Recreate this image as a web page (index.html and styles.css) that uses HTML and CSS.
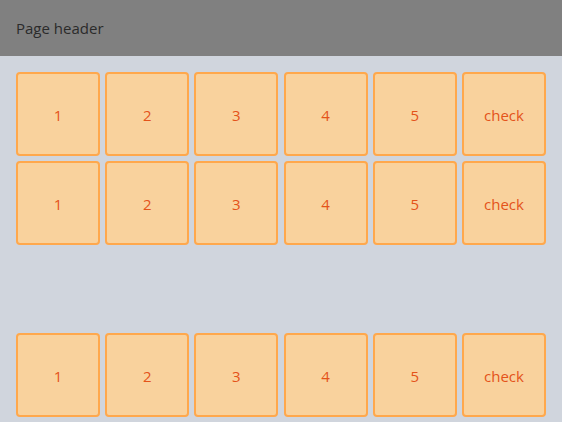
FILE: index.html
```html
<!DOCTYPE html>
<html>
<head>
<meta charset="utf-8">
<link rel="stylesheet" href="styles.css">
</head>
<body>
<header class="page-header">Page header</header>
<main class="content">
  <div class="row">
    <div class="tile">1</div><div class="tile">2</div><div class="tile">3</div><div class="tile">4</div><div class="tile">5</div><div class="tile">check</div>
  </div>
  <div class="row">
    <div class="tile">1</div><div class="tile">2</div><div class="tile">3</div><div class="tile">4</div><div class="tile">5</div><div class="tile">check</div>
  </div>
  <div class="spacer"></div>
  <div class="row">
    <div class="tile">1</div><div class="tile">2</div><div class="tile">3</div><div class="tile">4</div><div class="tile">5</div><div class="tile">check</div>
  </div>
</main>
</body>
</html>
```
FILE: styles.css
```css
html, body {
  margin: 0;
  padding: 0;
}
body {
  background: #d0d5dd;
  font-family: "Open Sans", "Noto Sans", sans-serif;
  height: 422px;
  overflow: hidden;
}
.page-header {
  height: 56px;
  background: #808080;
  color: #2b2b2b;
  font-size: 15px;
  display: flex;
  align-items: center;
  padding-left: 16px;
  box-sizing: border-box;
}
.content {
  padding: 16px;
  display: flex;
  flex-direction: column;
  gap: 5px;
}
.row {
  display: flex;
  justify-content: space-between;
}
.spacer {
  height: 78px;
}
.tile {
  width: 84px;
  height: 84px;
  box-sizing: border-box;
  background: #f9d29d;
  border: 2px solid #ffa84c;
  border-radius: 4px;
  color: #e4531a;
  font-size: 15px;
  padding-top: 1px;
  display: flex;
  align-items: center;
  justify-content: center;
}
```
